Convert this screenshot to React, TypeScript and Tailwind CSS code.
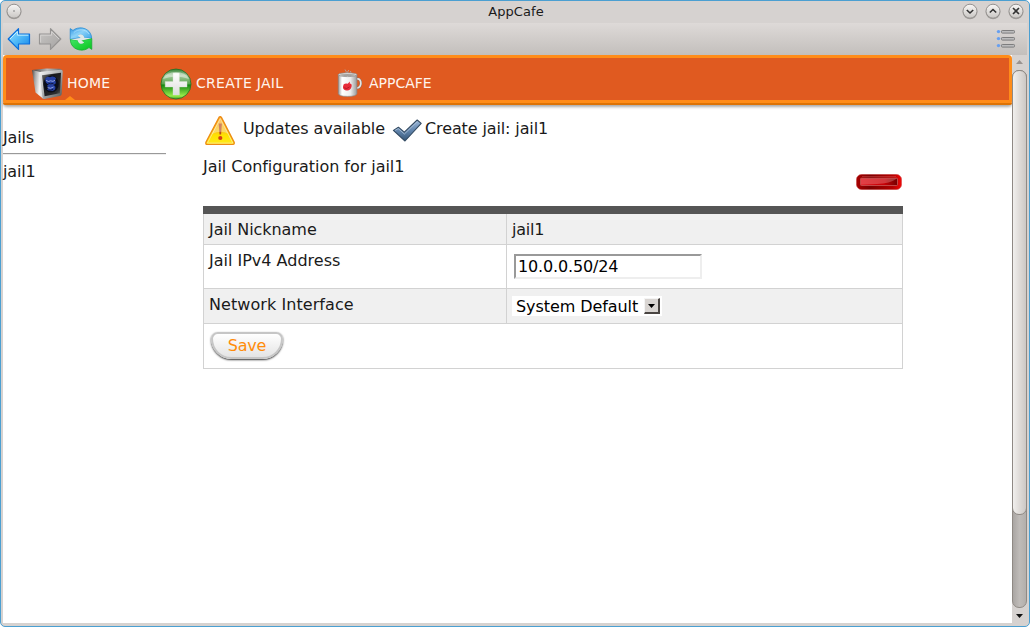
import type { ReactNode } from "react";

function BackArrow() {
  return (
    <svg width="24" height="24" viewBox="0 0 24 24" className="shrink-0">
      <defs>
        <linearGradient id="blueArrow" x1="0" y1="0" x2="1" y2="1">
          <stop offset="0" stopColor="#9be4ff" />
          <stop offset=".55" stopColor="#48b4f6" />
          <stop offset="1" stopColor="#1583e8" />
        </linearGradient>
      </defs>
      <path d="M1.2 12 11.5 1.6V7h11v10h-11v5.4z" fill="url(#blueArrow)" stroke="#0b6fdc" strokeWidth="1.2" strokeLinejoin="round" />
      <path d="M3 12 10.4 4.6V8.2h11" fill="none" stroke="#c9f3ff" strokeWidth=".9" />
    </svg>
  );
}

function ForwardArrow() {
  return (
    <svg width="24" height="24" viewBox="0 0 24 24" className="shrink-0">
      <defs>
        <linearGradient id="grayArrow" x1="0" y1="0" x2="1" y2="1">
          <stop offset="0" stopColor="#c8c6c4" />
          <stop offset="1" stopColor="#a5a3a2" />
        </linearGradient>
      </defs>
      <path d="M22.8 12 12.5 1.6V7H1.5v10h11v5.4z" fill="url(#grayArrow)" stroke="#969493" strokeWidth="1.2" strokeLinejoin="round" />
      <path d="M2.6 15.5V8.2h11V4.6L21 12" fill="none" stroke="#d6d4d2" strokeWidth=".9" />
    </svg>
  );
}

function ReloadIcon() {
  return (
    <svg width="24" height="24" viewBox="0 0 24 24" className="shrink-0">
      <defs>
        <linearGradient id="reloadBlue" x1="0" y1="0" x2="1" y2="1">
          <stop offset="0" stopColor="#2f94e4" />
          <stop offset=".45" stopColor="#8bd2f8" />
          <stop offset="1" stopColor="#3ba3e8" />
        </linearGradient>
        <linearGradient id="reloadGreen" x1="0" y1="0" x2="1" y2="1">
          <stop offset="0" stopColor="#43e768" />
          <stop offset="1" stopColor="#08c41c" />
        </linearGradient>
      </defs>
      <path d="M1.2 1.6 4 3.4C9-.9 18.5.3 21.6 6.8q1.2 2.6 1 4.6l-7.6-.4C14.6 7.8 11.6 7 9.4 8.4l2.6 2.2L1.2 12.4z" fill="url(#reloadBlue)" stroke="#2186d0" strokeWidth=".7" />
      <path d="M22.8 22.4 20 20.6C15 24.9 5.5 23.7 2.4 17.2q-1.2-2.6-1-4.6l7.6.4c.4 3.2 3.4 4 5.6 2.6L12 13.4l10.8-1.8z" fill="url(#reloadGreen)" stroke="#14a832" strokeWidth=".7" />
      <path d="M1.6 12.6 11.6 11 8.8 8.4C11 6.2 14.6 6.8 15.4 10.8l7 .4-10 2.2 2.8 2.2C13 17.8 9.4 17.2 8.6 13.2z" fill="#dfe8e6" />
      <path d="M4.8 5.6C9 1.6 16.5 1.8 20 7" fill="none" stroke="#b9e7ff" strokeWidth=".8" opacity=".8" />
    </svg>
  );
}

function WindowButton({ children }: { children: ReactNode }) {
  return (
    <svg width="16" height="17" viewBox="0 0 16 17" className="shrink-0">
      <defs>
        <linearGradient id="knob" x1="0" y1="0" x2="0" y2="1">
          <stop offset="0" stopColor="#f8f7f6" />
          <stop offset="1" stopColor="#c9c6c3" />
        </linearGradient>
      </defs>
      <circle cx="8" cy="9" r="7.3" fill="#aaa7a4" />
      <circle cx="8" cy="8.2" r="7" fill="url(#knob)" stroke="#8b8886" strokeWidth=".9" />
      {children}
    </svg>
  );
}

function ListIcon() {
  return (
    <svg width="20" height="20" viewBox="0 0 20 20">
      {[1, 8, 15].map((y) => (
        <g key={y}>
          <circle cx="2.5" cy={y + 1.6} r="1.7" fill="#669ff0" />
          <rect x="5.5" y={y + 0.5} width="13" height="2.6" rx=".8" fill="#bcbcbd" stroke="#7d7d7e" strokeWidth="1" />
        </g>
      ))}
    </svg>
  );
}

function JailIcon() {
  return (
    <svg width="32" height="34" viewBox="0 0 32 34" className="shrink-0">
      <defs>
        <linearGradient id="safeSide" x1="0" y1="0" x2="1" y2=".2">
          <stop offset="0" stopColor="#4a4a4a" />
          <stop offset=".3" stopColor="#a5a5a5" />
          <stop offset=".75" stopColor="#f4f4f4" />
          <stop offset="1" stopColor="#dcdcdc" />
        </linearGradient>
        <linearGradient id="safeTop" x1="0" y1="0" x2="1" y2="0">
          <stop offset="0" stopColor="#3c3c3c" />
          <stop offset=".5" stopColor="#b9b9b9" />
          <stop offset="1" stopColor="#666" />
        </linearGradient>
        <linearGradient id="safeFrame" x1="0" y1="0" x2="1" y2="1">
          <stop offset="0" stopColor="#fafafa" />
          <stop offset=".5" stopColor="#a8abac" />
          <stop offset="1" stopColor="#505354" />
        </linearGradient>
        <linearGradient id="safeFace" x1="0" y1="0" x2="1" y2="1">
          <stop offset="0" stopColor="#777" />
          <stop offset=".35" stopColor="#17181b" />
          <stop offset=".8" stopColor="#2c2d2f" />
          <stop offset="1" stopColor="#747474" />
        </linearGradient>
      </defs>
      <path d="M0 3 14 1.6l14 .2 2.6 1.6L9 6z" fill="url(#safeTop)" />
      <path d="M0 3 9 5.2 11.5 32 3.5 25.5z" fill="url(#safeSide)" />
      <path d="M7.6 6.2q.2-1.2 1.6-1.4L29 2.8q1.9 0 1.8 2L29.7 27q-.2 1.7-1.8 2.1L12.4 32q-1.6.1-1.9-1.6z" fill="url(#safeFrame)" />
      <path d="M10 8.2 29 5.8l-1 20.4-15.4 3.1z" fill="url(#safeFace)" />
      <ellipse cx="19.2" cy="17" rx="7.6" ry="8.6" fill="#0a0e1b" />
      <path d="M13.2 11.4c1.4-2 3.2-2 4.8-1.2 2-1.2 5-1 6.2 1.6l-1.6 1.4q2 1.2.7 3.9l-2.3 1q3.2.8 2.2 3.8c-1.4 2.6-6.2 2.8-8.2.4l1.8-1.2-2-2.4 2.1-1.2q-3.9-1.2-3.7-6.1z" fill="#2540a2" />
      <path d="M14 13.4q2.6 2 4.6.4 2.4 1.4 4.6-.6M15.6 20.6q3 1.6 6-.6" fill="none" stroke="#a9b9ec" strokeWidth=".8" />
      <path d="M16.2 16.2q2.4 1.2 5.2.2M16.4 23q2.4.8 4.6-.6" fill="none" stroke="#0b1235" strokeWidth=".9" />
    </svg>
  );
}

function AddIcon() {
  return (
    <svg width="32" height="34" viewBox="0 0 32 34" className="shrink-0">
      <defs>
        <linearGradient id="addBall" x1="0" y1="0" x2="0" y2="1">
          <stop offset="0" stopColor="#328334" />
          <stop offset=".22" stopColor="#a4c99c" />
          <stop offset=".5" stopColor="#56a44b" />
          <stop offset=".53" stopColor="#138712" />
          <stop offset=".9" stopColor="#99ec4c" />
          <stop offset="1" stopColor="#3ba126" />
        </linearGradient>
        <linearGradient id="plusFace" x1="0" y1="0" x2="0" y2="1">
          <stop offset="0" stopColor="#fff" />
          <stop offset="1" stopColor="#dcdedc" />
        </linearGradient>
      </defs>
      <circle cx="16" cy="17" r="15" fill="url(#addBall)" stroke="#276d22" strokeWidth=".8" />
      <path d="M3 12a14 11 0 0 1 26 0q-13-5-26 0z" fill="#fff" opacity=".42" />
      <path d="M13 6h6.4v8.4H27v5.6h-7.6v8H13v-8H5.2v-5.6H13z" fill="url(#plusFace)" stroke="#d6e4d2" strokeWidth=".4" />
    </svg>
  );
}

function MugIcon() {
  return (
    <svg width="26" height="30" viewBox="0 0 26 30" className="shrink-0">
      <defs>
        <linearGradient id="mugBody" x1="0" y1="0" x2="1" y2="0">
          <stop offset="0" stopColor="#9c9c9c" />
          <stop offset=".2" stopColor="#fff" />
          <stop offset=".65" stopColor="#ededed" />
          <stop offset="1" stopColor="#999" />
        </linearGradient>
      </defs>
      <path d="M8.5 5q2-2-.5-4.5M11.5 5q-2-2 .3-4M13 4.5q1.5-1 .5-2.5" fill="none" stroke="#b5a39b" strokeWidth=".9" />
      <path d="M20 10c5.2-1 5 9.2 0 9" fill="none" stroke="#80706a" strokeWidth="2.6" />
      <path d="M20 10c5.2-1 5 9.2 0 9" fill="none" stroke="#e8e6e4" strokeWidth="1.7" />
      <path d="M1.3 5.5h18.6V24.5q-.3 2.9-9.3 2.9t-9.3-2.9z" fill="url(#mugBody)" stroke="#8c8583" strokeWidth=".7" />
      <ellipse cx="10.6" cy="5.7" rx="9.3" ry="1.9" fill="#e9e8e7" stroke="#868280" strokeWidth=".7" />
      <ellipse cx="10.6" cy="6" rx="7.8" ry=".9" fill="#a5a19d" />
      <path d="M6.6 15.5q1.6-1.4 4-.8l2.4-2.3-.3 2.2q2.4.1 1.9 2.8-.9 4.2-4.7 4.1-3.9-.2-4-3.5z" fill="#e72a38" />
      <path d="M7.2 18.8q2.3 2 5.3-.9" stroke="#a0101d" strokeWidth=".7" fill="none" />
    </svg>
  );
}

function WarningIcon() {
  return (
    <svg width="32" height="32" viewBox="0 0 32 32" className="shrink-0">
      <defs>
        <linearGradient id="warn" x1="0" y1="0" x2="0" y2="1">
          <stop offset="0" stopColor="#f9a22b" />
          <stop offset=".55" stopColor="#fbc719" />
          <stop offset=".65" stopColor="#ffe000" />
          <stop offset="1" stopColor="#ffec19" />
        </linearGradient>
      </defs>
      <path d="M15.2 2q1.1-1 2.2.4l12.8 25q.4 1.9-1.2 2H3q-1.6-.1-1.1-2z" fill="url(#warn)" stroke="#ed8b14" strokeWidth="1.3" strokeLinejoin="round" />
      <path d="M16.3 3.4 28.8 28.1H3.4z" fill="none" stroke="#ffe69b" strokeWidth=".8" />
      <path d="M14.7 8.5h3.2l-.8 11h-1.6z" fill="#b94a18" />
      <circle cx="16.3" cy="23" r="2.1" fill="#d54013" />
      <path d="M16.2 3.5 24 18.5q-7-3.7-16.2.5z" fill="#fff" opacity=".32" />
    </svg>
  );
}

function CheckIcon() {
  return (
    <svg width="32" height="28" viewBox="0 0 32 28" className="shrink-0">
      <defs>
        <linearGradient id="check" x1="0" y1="0" x2="0" y2="1">
          <stop offset="0" stopColor="#9ebadb" />
          <stop offset=".5" stopColor="#6285ad" />
          <stop offset="1" stopColor="#365778" />
        </linearGradient>
      </defs>
      <path d="M2.4 13.4 7.4 10.2l5.9 5L26.2 3l4 3.4L14 24z" fill="url(#check)" stroke="#344b63" strokeWidth="1.1" strokeLinejoin="round" />
      <path d="m4.2 13.4 3-1.8 6.2 5.4L26.2 4.6" fill="none" stroke="#bbcde0" strokeWidth=".7" />
    </svg>
  );
}

function RemoveButton() {
  return (
    <svg width="46" height="16" viewBox="0 0 46 16">
      <defs>
        <linearGradient id="removeOuter" x1="0" y1="0" x2="1" y2="0">
          <stop offset="0" stopColor="#a80000" />
          <stop offset=".3" stopColor="#7c0000" />
          <stop offset=".8" stopColor="#b50000" />
          <stop offset="1" stopColor="#f00808" />
        </linearGradient>
        <linearGradient id="removeInner" x1="0" y1="0" x2="1" y2="0">
          <stop offset="0" stopColor="#dc0b12" />
          <stop offset=".65" stopColor="#c60006" />
          <stop offset="1" stopColor="#720000" />
        </linearGradient>
      </defs>
      <rect x=".3" y=".3" width="45.4" height="15.4" rx="5.5" fill="url(#removeOuter)" stroke="#d46a6a" strokeWidth=".6" />
      <rect x="4.5" y="4.2" width="37" height="7.3" rx=".8" fill="url(#removeInner)" stroke="#c85858" strokeWidth=".8" />
      <path d="M5 4.5h36q-7 5-20 5.5L5 10.8z" fill="#fff" opacity=".22" />
      <path d="M6 2.5h34" stroke="#d65b5b" strokeWidth=".7" opacity=".6" />
    </svg>
  );
}

function NavBar() {
  return (
    <nav className="h-[50px] shrink-0 rounded-[4px] border-[3px] border-b-0 border-[#ff8c19] bg-[#ff8c19] shadow-[0_2px_3px_#aaa]">
      <div className="flex h-[42px] items-center bg-[#e05a20] pl-[26px] text-[14px] text-[#fff4ec]">
        <div className="relative flex h-[42px] w-[128px] items-center">
          <div className="mt-[9px]"><JailIcon /></div>
          <span className="ml-[3px] mt-[8px] tracking-[.2px]">HOME</span>
          <svg className="absolute bottom-0 left-[33px]" width="10" height="4" viewBox="0 0 10 4">
            <path d="m0 4 5-4 5 4z" fill="#ff8c19" />
          </svg>
        </div>
        <div className="flex w-[177px] items-center">
          <div className="mt-[9px]"><AddIcon /></div>
          <span className="ml-1 mt-[8px] tracking-[.3px]">CREATE JAIL</span>
        </div>
        <div className="flex items-center">
          <div className="mt-[9px]"><MugIcon /></div>
          <span className="ml-[6px] mt-[8px]">APPCAFE</span>
        </div>
      </div>
      <div className="-mx-[3px] mt-[3px] h-[2px] rounded-b-[3px] bg-[#dd7306]" />
    </nav>
  );
}

function Scrollbar() {
  return (
    <div className="flex w-[15px] shrink-0 flex-col items-center bg-[#d6d2d0]">
      <svg width="15" height="15" viewBox="0 0 15 15" className="shrink-0">
        <path d="m4 9 3.5-4L11 9z" fill="#999390" />
      </svg>
      <div className="h-[538px] w-[15px] shrink-0 rounded-[7px] border border-[#8f8984] bg-linear-to-r from-[#aaa6a3] via-[#bfbbb8] to-[#b3afac]">
        <div className="-ml-px -mt-px h-[445px] w-[15px] rounded-[7px] border border-[#8f8984] bg-linear-to-r from-[#f1efed] via-[#dfdbd8] to-[#ccc8c5]" />
      </div>
      <svg width="15" height="15" viewBox="0 0 15 15" className="shrink-0">
        <path d="M4 6h7l-3.5 4z" fill="#111" />
      </svg>
    </div>
  );
}

function JailForm() {
  return (
    <div className="w-[700px] border border-t-0 border-[#d2d2d2]">
      <div className="-mx-px h-[8px] bg-[#555]" />
      <div className="flex h-[31px] border-b border-[#d2d2d2] bg-[#f0f0f0]">
        <div className="w-[303px] border-r border-[#d2d2d2] pl-[5px] pt-[6px] tracking-[-.05px]">Jail Nickname</div>
        <div className="pl-[5px] pt-[6px] tracking-[-.2px]">jail1</div>
      </div>
      <div className="flex h-[44px] border-b border-[#d2d2d2]">
        <div className="w-[303px] border-r border-[#d2d2d2] pl-[5px] pt-[6px]">Jail IPv4 Address</div>
        <div className="pl-[7px] pt-[9px]">
          <input
            defaultValue="10.0.0.50/24"
            className="block h-[25px] w-[188px] border-2 border-b-[#eee] border-l-[#999] border-r-[#eee] border-t-[#999] bg-white pl-[2px] tracking-[-.15px] text-black outline-none"
          />
        </div>
      </div>
      <div className="flex h-[35px] border-b border-[#d2d2d2] bg-[#f0f0f0]">
        <div className="w-[303px] border-r border-[#d2d2d2] pl-[5px] pt-[6px] tracking-[.07px]">Network Interface</div>
        <div className="pl-[5px] pt-[7px]">
          <button className="flex h-[20px] w-[150px] items-center bg-white pl-[4px] pr-[2px] text-black">
            <span className="tracking-[-.08px]">System Default</span>
            <span className="ml-auto flex h-[16px] w-[16px] items-center justify-center border border-b-2 border-r-2 border-b-[#4a4542] border-l-[#f4f4f4] border-r-[#4a4542] border-t-[#f4f4f4] bg-[#d9d5d2]">
              <svg width="7" height="4" viewBox="0 0 7 4"><path d="M0 0h7L3.5 4z" fill="#000" /></svg>
            </span>
          </button>
        </div>
      </div>
      <div className="h-[44px] pl-[7px] pt-[8px]">
        <button className="block h-[27px] w-[72px] rounded-[8px_8px_24px_24px] border-2 border-[#c6c6c6] bg-linear-to-b from-white to-[#e4e4e4] text-[#ff8c0a] shadow-[0_1px_2px_#333]">
          <span className="block leading-[23px] tracking-[-.2px]">Save</span>
        </button>
      </div>
    </div>
  );
}

export default function App() {
  return (
    <div className="h-[627px] w-[1030px] bg-white font-['DejaVu_Sans',sans-serif] text-[16px] leading-[19px] text-[#1a1a1a]">
      <div className="flex h-full flex-col overflow-hidden rounded-[5px] border border-[#4b9fd1] bg-[#d6d2d0] px-px pb-[3px]">
        <header className="flex h-[22px] shrink-0 items-center pl-[3.5px] pr-[4.5px] text-[13px] leading-[16px]">
          <div className="w-[62px] -mt-px">
            <WindowButton><circle cx="8" cy="8" r=".8" fill="#777" /></WindowButton>
          </div>
          <div className="flex-1 pl-[3px] text-center tracking-[.05px]">AppCafe</div>
          <div className="-mt-px flex w-[62px] gap-[7px]">
            <WindowButton><path d="m4.8 7 3.2 3 3.2-3" fill="none" stroke="#333" strokeWidth="1.6" /></WindowButton>
            <WindowButton><path d="m4.8 9.5 3.2-3 3.2 3" fill="none" stroke="#333" strokeWidth="1.6" /></WindowButton>
            <WindowButton><path d="m5 5 6 6m0-6-6 6" fill="none" stroke="#333" strokeWidth="1.6" /></WindowButton>
          </div>
        </header>
        <div className="mx-px flex h-[32px] shrink-0 items-center gap-[7px] bg-linear-to-b from-[#dedad8] to-[#c3bfbc] pl-[4px] pr-[11px]">
          <BackArrow />
          <ForwardArrow />
          <ReloadIcon />
          <div className="ml-auto"><ListIcon /></div>
        </div>
        <div className="ml-px flex min-h-0 flex-1">
          <main className="flex w-[1009px] shrink-0 flex-col bg-white">
            <NavBar />
            <div className="flex">
              <aside className="w-[200px] shrink-0 pt-[23px] tracking-[-.15px]">
                <div>Jails</div>
                <hr className="mb-[7px] mt-[6px] h-[2px] w-[163px] border-0 border-t border-[#999] bg-[#eee]" />
                <div>jail1</div>
              </aside>
              <section className="w-[700px] pt-[10px]">
                <div className="flex h-[33px]">
                  <div className="ml-px"><WarningIcon /></div>
                  <span className="ml-[7px] mt-[4px] w-[148px] tracking-[-.1px]">Updates available</span>
                  <div className="mt-[2px]"><CheckIcon /></div>
                  <span className="ml-[2px] mt-[4px] tracking-[-.12px]">Create jail: jail1</span>
                </div>
                <div className="mt-[9px] flex h-[49px] justify-between">
                  <span className="tracking-[-.04px]">Jail Configuration for jail1</span>
                  <div className="mr-px mt-[17px]"><RemoveButton /></div>
                </div>
                <JailForm />
              </section>
            </div>
          </main>
          <Scrollbar />
        </div>
      </div>
    </div>
  );
}
